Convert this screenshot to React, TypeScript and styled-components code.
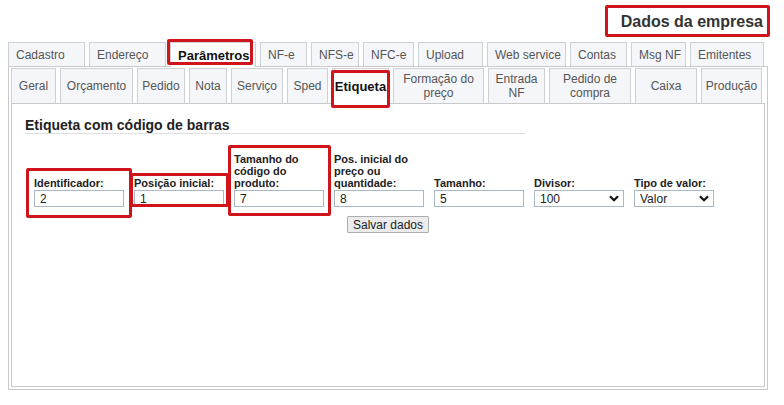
import React from 'react';
import styled, { createGlobalStyle } from 'styled-components';

const mainTabs = [
  { label: 'Cadastro', width: 77 },
  { label: 'Endereço', width: 77 },
  { label: 'Parâmetros', width: 86, active: true },
  { label: 'NF-e', width: 47 },
  { label: 'NFS-e', width: 48 },
  { label: 'NFC-e', width: 51 },
  { label: 'Upload', width: 65 },
  { label: 'Web service', width: 79 },
  { label: 'Contas', width: 57 },
  { label: 'Msg NF', width: 55 },
  { label: 'Emitentes', width: 74 },
];

const subTabs = [
  { label: 'Geral', width: 45 },
  { label: 'Orçamento', width: 73 },
  { label: 'Pedido', width: 48 },
  { label: 'Nota', width: 38 },
  { label: 'Serviço', width: 52 },
  { label: 'Sped', width: 41 },
  { label: 'Etiqueta', width: 57, active: true },
  { label: 'Formação do\npreço', width: 91 },
  { label: 'Entrada\nNF', width: 57 },
  { label: 'Pedido de\ncompra', width: 82 },
  { label: 'Caixa', width: 62 },
  { label: 'Produção', width: 61 },
];

const fields = [
  { label: 'Identificador:', value: '2' },
  { label: 'Posição inicial:', value: '1' },
  { label: 'Tamanho do\ncódigo do\nproduto:', value: '7' },
  { label: 'Pos. inicial do\npreço ou\nquantidade:', value: '8' },
  { label: 'Tamanho:', value: '5' },
];

const selects = [
  { label: 'Divisor:', value: '100', width: 90 },
  { label: 'Tipo de valor:', value: 'Valor', width: 80 },
];

// red annotation frames drawn over the screenshot
const marks = [
  { x: 605, y: 5, w: 165, h: 32 },
  { x: 167, y: 39, w: 86, h: 26 },
  { x: 331, y: 70, w: 59, h: 38 },
  { x: 26, y: 168, w: 106, h: 50 },
  { x: 130, y: 173, w: 99, h: 34 },
  { x: 228, y: 145, w: 103, h: 71 },
];

const Chevron = () => (
  <svg width="10" height="7" viewBox="0 0 10 7">
    <path d="M1 1.2 L5 5.2 L9 1.2" fill="none" stroke="#111" strokeWidth="2.2" />
  </svg>
);

const App: React.FC = () => {
  return (
    <Page>
      <GlobalStyle />
      <Header>
        <Title>Dados da empresa</Title>
      </Header>
      <TabStrip>
        {mainTabs.map((t) => (
          <MainTab key={t.label} $width={t.width} $active={t.active}>
            {t.label}
          </MainTab>
        ))}
      </TabStrip>
      <OuterPanel>
        <SubTabStrip>
          {subTabs.map((t) => (
            <SubTab key={t.label} $width={t.width} $active={t.active}>
              {t.label}
            </SubTab>
          ))}
        </SubTabStrip>
        <InnerPanel>
          <SectionTitle>Etiqueta com código de barras</SectionTitle>
          <FieldRow>
            {fields.map((f) => (
              <Field key={f.label}>
                <Label>{f.label}</Label>
                <TextInput defaultValue={f.value} />
              </Field>
            ))}
            {selects.map((s) => (
              <Field key={s.label}>
                <Label>{s.label}</Label>
                <SelectBox $width={s.width}>
                  <span>{s.value}</span>
                  <Chevron />
                </SelectBox>
              </Field>
            ))}
          </FieldRow>
          <Actions>
            <SaveButton>Salvar dados</SaveButton>
          </Actions>
        </InnerPanel>
      </OuterPanel>
      {marks.map((m, i) => (
        <Mark key={i} style={{ left: m.x, top: m.y, width: m.w, height: m.h }} />
      ))}
    </Page>
  );
};

export default App;

const GlobalStyle = createGlobalStyle`
  html, body {
    margin: 0;
    padding: 0;
    background: #fff;
  }
  body {
    font-family: 'Liberation Sans', Arial, sans-serif;
    color: #222;
  }
`;

const Page = styled.div`
  position: relative;
  width: 784px;
  height: 405px;
  box-sizing: border-box;
  padding: 0 16px 0 8px;
`;

const Header = styled.div`
  display: flex;
  justify-content: flex-end;
  padding: 12px 5px 0 0;
  height: 20px;
  margin-bottom: 10px;
`;

const Title = styled.h1`
  margin: 0;
  font-size: 16px;
  line-height: 20px;
  font-weight: 700;
  color: #333;
`;

const TabStrip = styled.div`
  display: flex;
  gap: 4px;
  height: 24px;
  align-items: flex-end;
  position: relative;
  z-index: 1;
`;

const MainTab = styled.div<{ $width: number; $active?: boolean }>`
  box-sizing: border-box;
  width: ${(p) => p.$width}px;
  height: ${(p) => (p.$active ? 25 : 24)}px;
  margin-bottom: ${(p) => (p.$active ? -1 : 0)}px;
  padding: 0 0 0 7px;
  display: flex;
  align-items: center;
  border: 1px solid #cdd1d6;
  border-bottom: none;
  background: ${(p) => (p.$active ? '#fff' : '#f4f6f9')};
  font-size: ${(p) => (p.$active ? 13 : 12)}px;
  font-weight: ${(p) => (p.$active ? 700 : 400)};
  color: ${(p) => (p.$active ? '#111' : '#555')};
  white-space: nowrap;
`;

const OuterPanel = styled.div`
  box-sizing: border-box;
  height: 324px;
  border: 1px solid #c9c9c9;
  padding: 1px 1px 2px 2px;
  display: flex;
  flex-direction: column;
`;

const SubTabStrip = styled.div`
  display: flex;
  gap: 4px;
  height: 35px;
  align-items: flex-end;
  position: relative;
  z-index: 1;
`;

const SubTab = styled.div<{ $width: number; $active?: boolean }>`
  box-sizing: border-box;
  width: ${(p) => p.$width}px;
  height: ${(p) => (p.$active ? 36 : 35)}px;
  margin-bottom: ${(p) => (p.$active ? -1 : 0)}px;
  display: flex;
  align-items: center;
  justify-content: center;
  text-align: center;
  white-space: pre-line;
  line-height: 14px;
  border: 1px solid #cdd1d6;
  border-bottom: none;
  background: ${(p) => (p.$active ? '#fff' : '#f4f6f9')};
  font-size: ${(p) => (p.$active ? 13 : 12)}px;
  font-weight: ${(p) => (p.$active ? 700 : 400)};
  color: ${(p) => (p.$active ? '#111' : '#555')};
`;

const InnerPanel = styled.div`
  flex: 1;
  box-sizing: border-box;
  border: 1px solid #c9c9c9;
  margin-right: 1px;
  padding: 13px 13px 0 13px;
  background: #fff;
`;

const SectionTitle = styled.h2`
  margin: 0;
  width: 500px;
  font-size: 14px;
  line-height: 16px;
  font-weight: 700;
  color: #222;
  border-bottom: 1px solid #dedede;
`;

const FieldRow = styled.div`
  display: flex;
  align-items: flex-end;
  margin: 19px 0 0 9px;
`;

const Field = styled.div`
  width: 100px;
  display: flex;
  flex-direction: column;
`;

const Label = styled.label`
  font-size: 11px;
  line-height: 12px;
  font-weight: 700;
  color: #222;
  white-space: pre-line;
  margin-bottom: 1px;
`;

const TextInput = styled.input`
  box-sizing: border-box;
  width: 90px;
  height: 17px;
  border: 1px solid #a9b9c8;
  padding: 0 5px;
  font-family: 'Liberation Sans', Arial, sans-serif;
  font-size: 12px;
  color: #222;
  outline: none;
`;

const SelectBox = styled.div<{ $width: number }>`
  box-sizing: border-box;
  width: ${(p) => p.$width}px;
  height: 17px;
  border: 1px solid #a9b9c8;
  padding: 0 4px 0 5px;
  display: flex;
  align-items: center;
  justify-content: space-between;
  font-size: 12px;
  color: #222;
`;

const Actions = styled.div`
  display: flex;
  justify-content: center;
  margin-top: 9px;
`;

const SaveButton = styled.button`
  box-sizing: border-box;
  width: 82px;
  height: 17px;
  padding: 0;
  border: 1px solid #adadad;
  border-radius: 1px;
  background: #ececec;
  font-family: 'Liberation Sans', Arial, sans-serif;
  font-size: 12px;
  color: #222;
`;

const Mark = styled.div`
  position: absolute;
  box-sizing: border-box;
  border: 3px solid #d0141c;
  border-radius: 2px;
  pointer-events: none;
  z-index: 5;
`;
